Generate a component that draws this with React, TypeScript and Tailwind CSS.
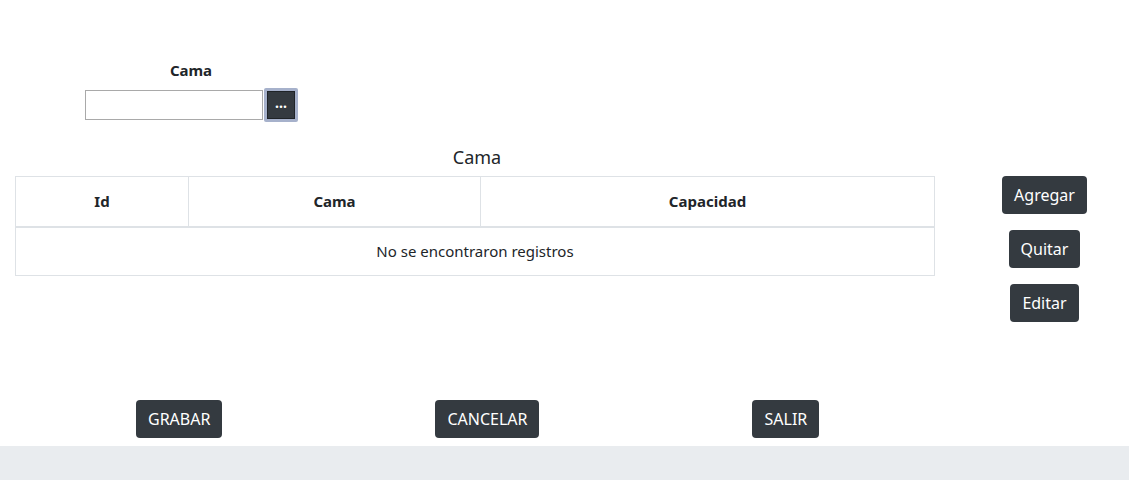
export default function App() {
  return (
    <div className="min-h-[480px] flex flex-col bg-white text-[#212529] font-['Segoe_UI','Noto_Sans',sans-serif]">
      <div className="flex-1">
        {/* Filter */}
        <div className="pt-[60px] pl-[85px]">
          <div className="w-[212px] flex flex-col items-center">
            <label className="text-[15px] font-bold leading-[20px]">Cama</label>
            <div className="mt-[8px] flex items-center self-stretch">
              <input type="text" className="w-[178px] h-[30px] border border-[#a9a9a9] bg-white" />
              <div className="ml-[1px] p-[3px] bg-[#a6b1cb] rounded-[2px]">
                <button className="w-[28px] h-[28px] bg-[#343a40] border border-[#1f2327] text-white text-[14px] font-bold leading-none flex items-end justify-center pb-[8px]">
                  ...
                </button>
              </div>
            </div>
          </div>
        </div>

        {/* Grid + actions */}
        <div className="mt-[23px] flex">
          <div className="ml-[15px] w-[920px]">
            <div className="text-center text-[18px] leading-[24px] mb-[7px] pl-[4px]">Cama</div>
            <table className="w-full border-collapse text-[15px]">
              <thead>
                <tr className="h-[50px]">
                  <th className="w-[173px] border border-[#dee2e6] border-b-2 font-bold">Id</th>
                  <th className="w-[292px] border border-[#dee2e6] border-b-2 font-bold">Cama</th>
                  <th className="border border-[#dee2e6] border-b-2 font-bold">Capacidad</th>
                </tr>
              </thead>
              <tbody>
                <tr className="h-[49px]">
                  <td colSpan={3} className="border border-[#dee2e6] text-center">
                    No se encontraron registros
                  </td>
                </tr>
              </tbody>
            </table>
          </div>
          <div className="flex-1 flex flex-col items-center gap-[16px] pt-[31px] pl-[25px]">
            {["Agregar", "Quitar", "Editar"].map((t) => (
              <button key={t} className="h-[38px] px-[12px] rounded-[4px] bg-[#343a40] text-white text-[16px]">
                {t}
              </button>
            ))}
          </div>
        </div>

        {/* Bottom actions */}
        <div className="mt-[78px] pl-[136px] flex gap-[213px]">
          {["GRABAR", "CANCELAR", "SALIR"].map((t) => (
            <button key={t} className="h-[38px] px-[12px] rounded-[4px] bg-[#343a40] text-white text-[16px]">
              {t}
            </button>
          ))}
        </div>
      </div>
      <div className="h-[34px] bg-[#e9ecef]" />
    </div>
  );
}
